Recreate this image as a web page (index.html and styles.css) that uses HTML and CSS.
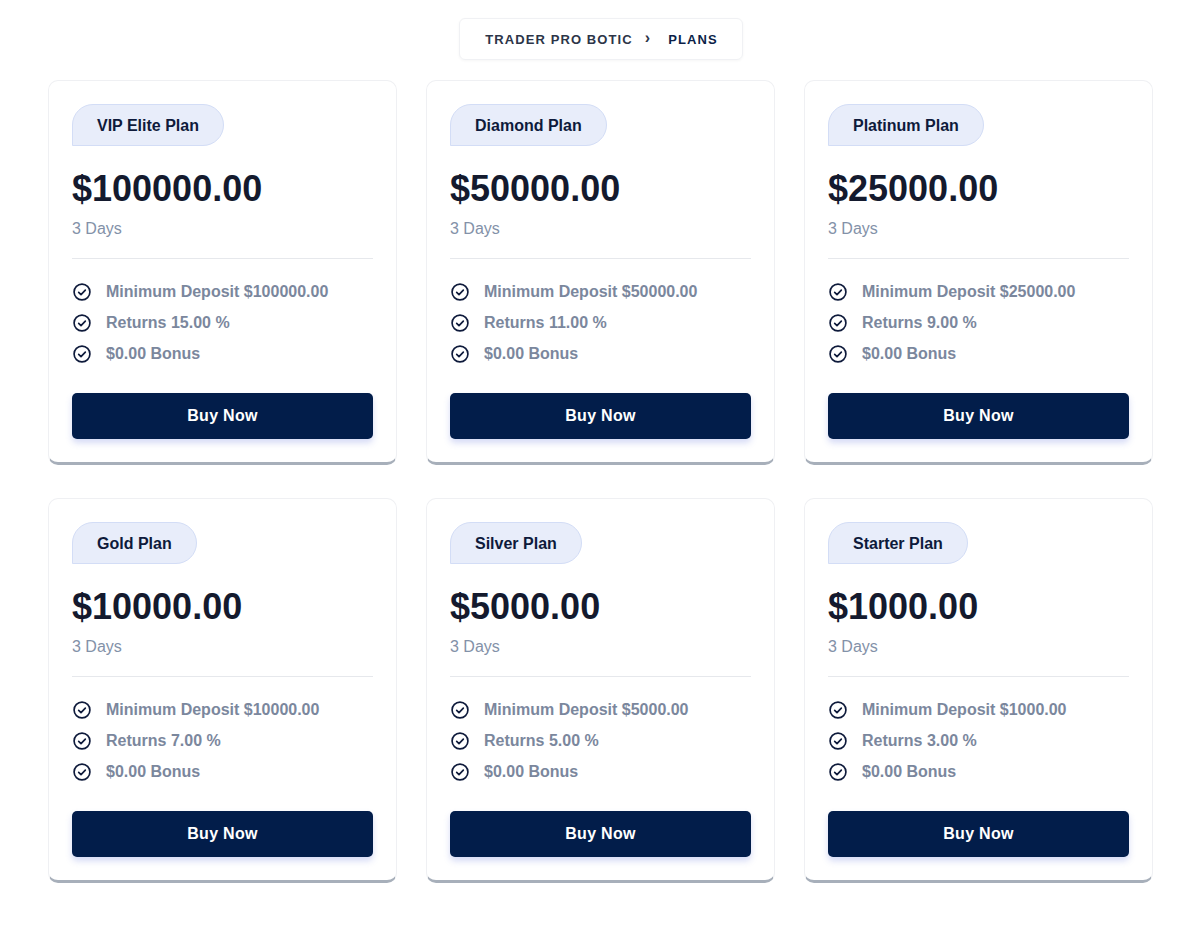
FILE: index.html
```html
<!DOCTYPE html>
<html lang="en">
<head>
<meta charset="utf-8">
<title>Plans</title>
<link rel="stylesheet" href="styles.css">
</head>
<body>
<div class="page">
  <nav class="crumbs">
    <span class="crumb">TRADER PRO BOTIC</span>
    <span class="sep">&#8250;</span>
    <span class="crumb current">PLANS</span>
  </nav>
  <div class="grid">
    <div class="card">
      <div class="pill">VIP Elite Plan</div>
      <div class="price">$100000.00</div>
      <div class="dur">3 Days</div>
      <ul class="feats">
        <li><svg class="ck" viewBox="0 0 24 24"><circle cx="12" cy="12" r="9.5"/><path d="M8 12.4l2.8 2.8L16 9.8"/></svg>Minimum Deposit $100000.00</li>
        <li><svg class="ck" viewBox="0 0 24 24"><circle cx="12" cy="12" r="9.5"/><path d="M8 12.4l2.8 2.8L16 9.8"/></svg>Returns 15.00 %</li>
        <li><svg class="ck" viewBox="0 0 24 24"><circle cx="12" cy="12" r="9.5"/><path d="M8 12.4l2.8 2.8L16 9.8"/></svg>$0.00 Bonus</li>
      </ul>
      <button class="buy">Buy Now</button>
    </div>
    <div class="card">
      <div class="pill">Diamond Plan</div>
      <div class="price">$50000.00</div>
      <div class="dur">3 Days</div>
      <ul class="feats">
        <li><svg class="ck" viewBox="0 0 24 24"><circle cx="12" cy="12" r="9.5"/><path d="M8 12.4l2.8 2.8L16 9.8"/></svg>Minimum Deposit $50000.00</li>
        <li><svg class="ck" viewBox="0 0 24 24"><circle cx="12" cy="12" r="9.5"/><path d="M8 12.4l2.8 2.8L16 9.8"/></svg>Returns 11.00 %</li>
        <li><svg class="ck" viewBox="0 0 24 24"><circle cx="12" cy="12" r="9.5"/><path d="M8 12.4l2.8 2.8L16 9.8"/></svg>$0.00 Bonus</li>
      </ul>
      <button class="buy">Buy Now</button>
    </div>
    <div class="card">
      <div class="pill">Platinum Plan</div>
      <div class="price">$25000.00</div>
      <div class="dur">3 Days</div>
      <ul class="feats">
        <li><svg class="ck" viewBox="0 0 24 24"><circle cx="12" cy="12" r="9.5"/><path d="M8 12.4l2.8 2.8L16 9.8"/></svg>Minimum Deposit $25000.00</li>
        <li><svg class="ck" viewBox="0 0 24 24"><circle cx="12" cy="12" r="9.5"/><path d="M8 12.4l2.8 2.8L16 9.8"/></svg>Returns 9.00 %</li>
        <li><svg class="ck" viewBox="0 0 24 24"><circle cx="12" cy="12" r="9.5"/><path d="M8 12.4l2.8 2.8L16 9.8"/></svg>$0.00 Bonus</li>
      </ul>
      <button class="buy">Buy Now</button>
    </div>
    <div class="card">
      <div class="pill">Gold Plan</div>
      <div class="price">$10000.00</div>
      <div class="dur">3 Days</div>
      <ul class="feats">
        <li><svg class="ck" viewBox="0 0 24 24"><circle cx="12" cy="12" r="9.5"/><path d="M8 12.4l2.8 2.8L16 9.8"/></svg>Minimum Deposit $10000.00</li>
        <li><svg class="ck" viewBox="0 0 24 24"><circle cx="12" cy="12" r="9.5"/><path d="M8 12.4l2.8 2.8L16 9.8"/></svg>Returns 7.00 %</li>
        <li><svg class="ck" viewBox="0 0 24 24"><circle cx="12" cy="12" r="9.5"/><path d="M8 12.4l2.8 2.8L16 9.8"/></svg>$0.00 Bonus</li>
      </ul>
      <button class="buy">Buy Now</button>
    </div>
    <div class="card">
      <div class="pill">Silver Plan</div>
      <div class="price">$5000.00</div>
      <div class="dur">3 Days</div>
      <ul class="feats">
        <li><svg class="ck" viewBox="0 0 24 24"><circle cx="12" cy="12" r="9.5"/><path d="M8 12.4l2.8 2.8L16 9.8"/></svg>Minimum Deposit $5000.00</li>
        <li><svg class="ck" viewBox="0 0 24 24"><circle cx="12" cy="12" r="9.5"/><path d="M8 12.4l2.8 2.8L16 9.8"/></svg>Returns 5.00 %</li>
        <li><svg class="ck" viewBox="0 0 24 24"><circle cx="12" cy="12" r="9.5"/><path d="M8 12.4l2.8 2.8L16 9.8"/></svg>$0.00 Bonus</li>
      </ul>
      <button class="buy">Buy Now</button>
    </div>
    <div class="card">
      <div class="pill">Starter Plan</div>
      <div class="price">$1000.00</div>
      <div class="dur">3 Days</div>
      <ul class="feats">
        <li><svg class="ck" viewBox="0 0 24 24"><circle cx="12" cy="12" r="9.5"/><path d="M8 12.4l2.8 2.8L16 9.8"/></svg>Minimum Deposit $1000.00</li>
        <li><svg class="ck" viewBox="0 0 24 24"><circle cx="12" cy="12" r="9.5"/><path d="M8 12.4l2.8 2.8L16 9.8"/></svg>Returns 3.00 %</li>
        <li><svg class="ck" viewBox="0 0 24 24"><circle cx="12" cy="12" r="9.5"/><path d="M8 12.4l2.8 2.8L16 9.8"/></svg>$0.00 Bonus</li>
      </ul>
      <button class="buy">Buy Now</button>
    </div>
  </div>
</div>
</body>
</html>
```

FILE: styles.css
```css
* { box-sizing: border-box; }
html, body { margin: 0; padding: 0; background: #ffffff; }
body {
  font-family: "Liberation Sans", Arial, sans-serif;
  color: #141a2e;
}
.page {
  padding: 18px 46px 40px 48px;
  display: flex;
  flex-direction: column;
  align-items: center;
}
.crumbs {
  display: flex;
  align-items: center;
  height: 42px;
  padding: 0 24px 0 25px;
  border: 1px solid #f0f1f4;
  border-radius: 6px;
  box-shadow: 0 1px 3px rgba(0,0,0,0.04);
  font-size: 13px;
  font-weight: 700;
  letter-spacing: 1.1px;
  margin-left: 0;
}
.crumb { color: #2c3548; }
.crumb.current { color: #0c1f48; }
.sep {
  color: #2c3548;
  font-size: 16px;
  margin: 0 17px 2px 12px;
}
.grid {
  margin-top: 20px;
  width: 100%;
  display: grid;
  grid-template-columns: repeat(3, 349px);
  column-gap: 29px;
  row-gap: 33px;
}
.card {
  border: 1px solid #eff0f3;
  border-bottom: 3px solid #a7afba;
  border-radius: 10px;
  padding: 23px 23px 23px 23px;
  height: 385px;
  display: flex;
  flex-direction: column;
}
.pill {
  align-self: flex-start;
  height: 42px;
  line-height: 36px;
  padding: 3px 24px 0;
  background: #e8edfa;
  border: 1px solid #d3ddf6;
  border-radius: 21px 21px 21px 0;
  font-size: 16px;
  font-weight: 700;
  color: #0e1a3b;
}
.price {
  margin-top: 22px;
  font-size: 36px;
  font-weight: 700;
  line-height: 42px;
  color: #141a2e;
}
.dur {
  margin-top: 9px;
  font-size: 16px;
  line-height: 20px;
  color: #8391a8;
  padding-bottom: 19px;
  border-bottom: 1px solid #e6e8ec;
}
.feats {
  list-style: none;
  margin: 17px 0 0 0;
  padding: 0;
}
.feats li {
  display: flex;
  align-items: center;
  height: 31px;
  font-size: 16px;
  font-weight: 700;
  color: #7b879d;
}
.ck {
  width: 20px;
  height: 20px;
  margin: 0 14px 0 0;
  fill: none;
  stroke: #0e1a3b;
  stroke-width: 2;
  stroke-linecap: round;
  stroke-linejoin: round;
}
.buy {
  margin-top: 24px;
  height: 46px;
  width: 100%;
  border: none;
  border-radius: 5px;
  background: #021d4a;
  color: #ffffff;
  font-family: "Liberation Sans", Arial, sans-serif;
  font-size: 16px;
  font-weight: 700;
  letter-spacing: 0.3px;
  box-shadow: 0 4px 6px rgba(90,110,220,0.25);
}
```
